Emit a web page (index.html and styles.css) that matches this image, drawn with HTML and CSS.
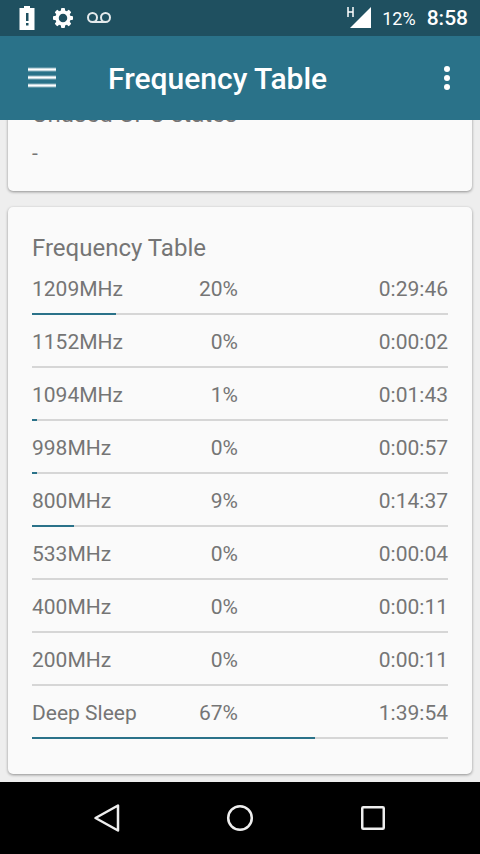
FILE: index.html
```html
<!DOCTYPE html>
<html lang="en">
<head>
<meta charset="utf-8">
<meta name="viewport" content="width=device-width, initial-scale=1">
<title>Frequency Table</title>
<link rel="stylesheet" href="styles.css">
</head>
<body>
<div class="status">
  <div class="status-icons">
    <svg width="20" height="24" viewBox="0 0 20 24"><path fill="#fff" fill-rule="evenodd" d="M5 0h6v2h4.500v22H.500V2H5zM7 7v8h2.500V7zM7 17v2.500h2.500V17z"/></svg>
    <svg width="20" height="20" viewBox="0 0 20 20"><g fill="#fff"><g id="teeth"><rect x="8" y="0" width="4" height="4" rx="1"/><rect x="8" y="16" width="4" height="4" rx="1"/><rect x="0" y="8" width="4" height="4" rx="1"/><rect x="16" y="8" width="4" height="4" rx="1"/></g><use href="#teeth" transform="rotate(45 10 10)"/></g><circle cx="10" cy="10" r="6" fill="none" stroke="#fff" stroke-width="3.500"/></svg>
    <svg width="24" height="12" viewBox="0 0 24 12"><g fill="none" stroke="#e4eaec" stroke-width="2"><circle cx="5.500" cy="5.500" r="4.500"/><circle cx="18.500" cy="5.500" r="4.500"/><path d="M5.500 10h13"/></g></svg>
  </div>
  <div class="status-info">
    <svg width="24" height="22" viewBox="0 0 24 22"><path d="M24 0v21H3z" fill="#fff"/><path d="M1 0v10M6 0v10M1 5h5" fill="none" stroke="#fff" stroke-width="1.500"/></svg>
    <span class="battery">12%</span>
    <span class="clock">8:58</span>
  </div>
</div>
<header class="toolbar">
  <button class="icon-button" aria-label="Open menu"><svg width="28" height="22" viewBox="0 0 28 22"><path d="M0 2.500h28M0 10.500h28M0 18.500h28" stroke="#fff" stroke-opacity=".45" stroke-width="4"/><path d="M0 2.500h28M0 10.500h28M0 18.500h28" stroke="#fff" stroke-width="2"/></svg></button>
  <h1>Frequency Table</h1>
  <button class="icon-button" aria-label="More options"><svg width="6" height="24" viewBox="0 0 6 24"><g fill="#fff"><circle cx="3" cy="3" r="3"/><circle cx="3" cy="12" r="3"/><circle cx="3" cy="21" r="3"/></g></svg></button>
</header>
<main class="content">
  <section class="card">
    <h2>Unused CPU states</h2>
    <p>-</p>
  </section>
  <section class="card">
    <h2 id="freq">Frequency Table</h2>
    <table aria-labelledby="freq">
      <tbody>
        <tr><td>1209MHz</td><td>20%</td><td>0:29:46</td></tr>
        <tr class="bar"><td colspan="3"><progress value="20.2" max="100" aria-label="1209MHz"></progress></td></tr>
        <tr><td>1152MHz</td><td>0%</td><td>0:00:02</td></tr>
        <tr class="bar"><td colspan="3"><progress value="0" max="100" aria-label="1152MHz"></progress></td></tr>
        <tr><td>1094MHz</td><td>1%</td><td>0:01:43</td></tr>
        <tr class="bar"><td colspan="3"><progress value="1.2" max="100" aria-label="1094MHz"></progress></td></tr>
        <tr><td>998MHz</td><td>0%</td><td>0:00:57</td></tr>
        <tr class="bar"><td colspan="3"><progress value="1.2" max="100" aria-label="998MHz"></progress></td></tr>
        <tr><td>800MHz</td><td>9%</td><td>0:14:37</td></tr>
        <tr class="bar"><td colspan="3"><progress value="10.1" max="100" aria-label="800MHz"></progress></td></tr>
        <tr><td>533MHz</td><td>0%</td><td>0:00:04</td></tr>
        <tr class="bar"><td colspan="3"><progress value="0" max="100" aria-label="533MHz"></progress></td></tr>
        <tr><td>400MHz</td><td>0%</td><td>0:00:11</td></tr>
        <tr class="bar"><td colspan="3"><progress value="0" max="100" aria-label="400MHz"></progress></td></tr>
        <tr><td>200MHz</td><td>0%</td><td>0:00:11</td></tr>
        <tr class="bar"><td colspan="3"><progress value="0" max="100" aria-label="200MHz"></progress></td></tr>
        <tr><td>Deep Sleep</td><td>67%</td><td>1:39:54</td></tr>
        <tr class="bar"><td colspan="3"><progress value="68" max="100" aria-label="Deep Sleep"></progress></td></tr>
      </tbody>
    </table>
  </section>
</main>
<nav class="navbar" aria-label="System">
  <button aria-label="Back"><svg width="28" height="30" viewBox="0 0 28 30"><path d="M25 2.500v25L2.500 15z" fill="none" stroke="#eee" stroke-width="2.500" stroke-linejoin="round"/></svg></button>
  <button aria-label="Home"><svg width="28" height="28" viewBox="0 0 28 28"><circle cx="14" cy="14" r="11.800" fill="none" stroke="#eee" stroke-width="2.500"/></svg></button>
  <button aria-label="Recent apps"><svg width="24" height="24" viewBox="0 0 24 24"><rect x="1.250" y="1.250" width="21.500" height="21.500" rx="1" fill="none" stroke="#eee" stroke-width="2.500"/></svg></button>
</nav>
</body>
</html>
```

FILE: styles.css
```css
* {
  box-sizing: border-box;
}

body {
  margin: 0;
  height: 100vh;
  display: flex;
  flex-direction: column;
  background: #eee;
  color: #757575;
  font-family: Roboto, "Liberation Sans", sans-serif;
  font-size: 21px;
  overflow: hidden;
}

h1, h2, p {
  margin: 0;
}

svg {
  display: block;
}

button {
  border: 0;
  padding: 0;
  background: none;
  display: flex;
  align-items: center;
  justify-content: center;
}

.status {
  flex: none;
  height: 36px;
  padding: 0 12px 0 19px;
  display: flex;
  align-items: center;
  justify-content: space-between;
  background: #1f5060;
  color: #fff;
}

.status-icons {
  display: flex;
  align-items: center;
  gap: 14px;
}

.status-info {
  display: flex;
  align-items: center;
  gap: 11px;
}

.battery {
  font-size: 18px;
}

.clock {
  font-size: 21px;
  font-weight: 500;
}

.toolbar {
  flex: none;
  height: 84px;
  padding: 0 24px 0 28px;
  display: flex;
  align-items: center;
  background: #2a7289;
  color: #fff;
}

.toolbar h1 {
  flex: 1;
  margin-left: 52px;
  padding-top: 2px;
  font-size: 30px;
  font-weight: 500;
  line-height: 36px;
}

.icon-button {
  height: 48px;
  min-width: 18px;
}

.content {
  flex: 1;
  min-height: 0;
  padding: 8px;
  display: flex;
  flex-direction: column;
  justify-content: flex-end;
  gap: 16px;
  overflow: hidden;
}

.card {
  flex: none;
  padding: 28px 24px 24px;
  border-radius: 5px;
  background: #fafafa;
  box-shadow: 0 1px 3px rgba(0, 0, 0, 0.4);
}

.card h2 {
  font-size: 24px;
  font-weight: 400;
  line-height: 27px;
}

.card p {
  margin-top: 11px;
  line-height: 28px;
}

.card table {
  width: 100%;
  margin-bottom: 11px;
  table-layout: fixed;
  border-collapse: collapse;
}

td {
  height: 51px;
  padding: 2px 0 0;
  line-height: 32px;
  text-align: right;
  white-space: nowrap;
}

td:first-child {
  text-align: left;
}

td:nth-child(2) {
  padding-right: 2px;
}

tr:first-child td:first-child,
tr:first-child td:nth-child(2) {
  width: 25%;
}

.bar td {
  height: 2px;
  padding: 0;
  line-height: 0;
}

progress {
  display: block;
  width: 100%;
  height: 2px;
  border: 0;
  appearance: none;
  background: #d6d6d6;
}

progress::-webkit-progress-bar {
  background: #d6d6d6;
}

progress::-webkit-progress-value {
  background: #2a7289;
}

.navbar {
  flex: none;
  height: 72px;
  padding: 0 40px;
  display: flex;
  background: #000;
}

.navbar button {
  flex: 1;
}
```
